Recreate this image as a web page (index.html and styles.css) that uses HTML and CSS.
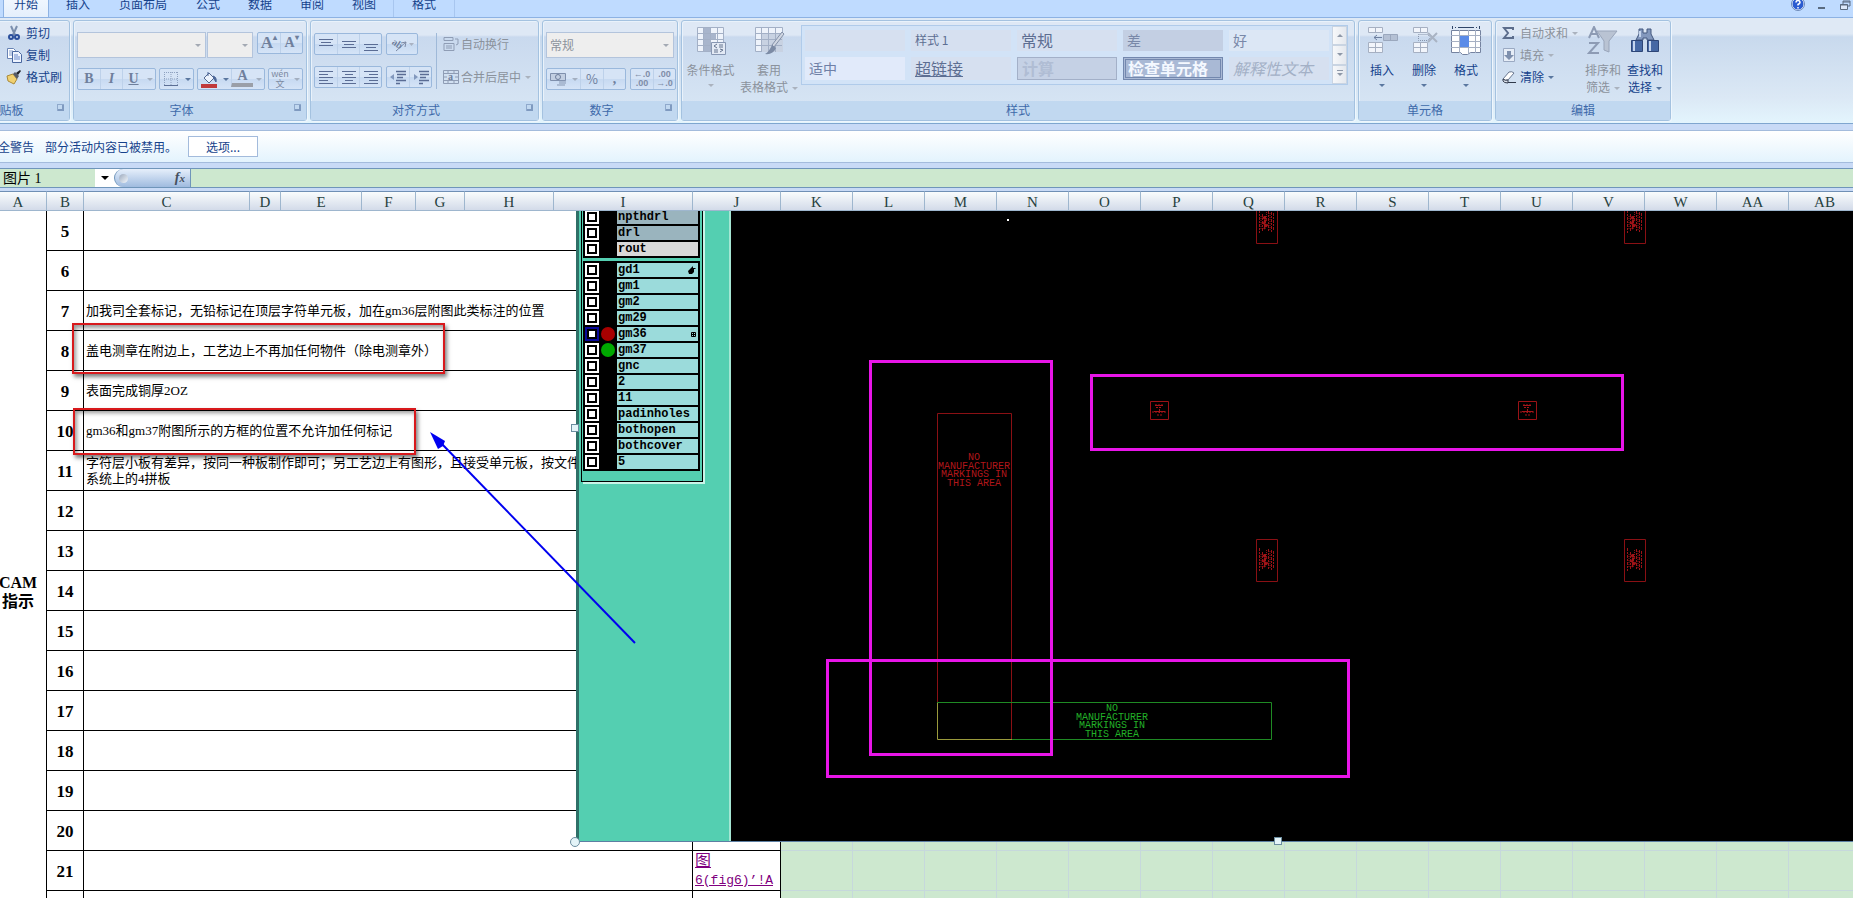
FILE: index.html
```
<!DOCTYPE html>
<html lang="zh-CN">

<head>
    <meta charset="utf-8">
    <title>CAM 指示</title>
    <link rel="stylesheet" href="styles.css">
</head>

<body>
    <nav class="tabs">
        <a href="#" class="tab active">开始</a>
        <a href="#" class="tab">插入</a>
        <a href="#" class="tab wide">页面布局</a>
        <a href="#" class="tab">公式</a>
        <a href="#" class="tab">数据</a>
        <a href="#" class="tab">审阅</a>
        <a href="#" class="tab">视图</a>
        <a href="#" class="tab context">格式</a>
        <div class="window-tools">
            <button aria-label="帮助"><svg width="14" height="14"><circle cx="7" cy="7" r="6" fill="#2a5bd0" stroke="#e8f0ff"/><circle cx="7" cy="7" r="6.5" fill="none" stroke="#6b88b8"/><path d="M5 5.5q0-2 2-2t2 2q0 1-2 2v1M7 10v1.500" fill="none" stroke="#fff" stroke-width="1.500"/></svg></button>
            <button aria-label="最小化"><svg width="10" height="14"><path d="M1 11h7" stroke="#5a6b80" stroke-width="2"/></svg></button>
            <button aria-label="还原"><svg width="12" height="14"><path d="M4 7V4h7v5H9M4 5h7" fill="none" stroke="#5a6b80"/><path d="M1.500 7.500h7v5h-7zM1 8h8" fill="#dce9fb" stroke="#5a6b80"/></svg></button>
        </div>
    </nav>

    <div class="ribbon">
        <section class="group clipboard">
            <div class="body stack">
                <button><svg width="16" height="16"><path d="M5 1l4 9M11 1L7 10" stroke="#7b8fae" stroke-width="2"/><circle cx="5" cy="12" r="2" fill="none" stroke="#2b4f9c" stroke-width="2"/><circle cx="11" cy="12" r="2" fill="none" stroke="#2b4f9c" stroke-width="2"/></svg>剪切</button>
                <button><svg width="16" height="16"><path d="M1.500 1.500h6l2 2v8h-8z" fill="#fff" stroke="#6883b4"/><path d="M3 4h4M3 6h4M3 8h4" stroke="#7f9cd0"/><path d="M6.500 4.500h6l3 3v8h-9z" fill="#eef4ff" stroke="#4a68a0"/><path d="M8 8h4M8 10h6M8 12h6" stroke="#6a8acb"/></svg>复制</button>
                <button><svg width="16" height="16"><path d="M1 7l6-2 4 5-3 5-6-3z" fill="#f0d070" stroke="#a98a3a"/><path d="M7 5l2-2 4 4-2 3z" fill="#555b66"/><path d="M10 4l4-3 1 1-3 4z" fill="#20242c"/></svg>格式刷</button>
            </div>
            <footer>剪贴板<i class="launcher"></i></footer>
        </section>

        <section class="group font">
            <div class="body rows">
                <div class="row top">
                    <span class="combo family"><select aria-label="字体" disabled><option></option></select></span>
                    <span class="combo size"><select aria-label="字号" disabled><option></option></select></span>
                    <div class="cluster gap-left">
                        <button class="glyph big" disabled>A<sup>▴</sup></button>
                        <button class="glyph" disabled>A<sup>▾</sup></button>
                    </div>
                </div>
                <div class="row">
                    <div class="cluster">
                        <button class="glyph" disabled>B</button>
                        <button class="glyph italic" disabled>I</button>
                        <button class="glyph underline" disabled>U</button>
                        <button class="arrow" aria-label="下划线样式" disabled></button>
                    </div>
                    <div class="cluster">
                        <button aria-label="边框"><svg width="14" height="14"><path d="M.5 0v14M7 0v14M13.500 0v14M0 .5h14M0 7h14" stroke="#8fa2c0" stroke-dasharray="1 1"/><path d="M0 13.500h14" stroke="#5c6f95"/></svg></button>
                        <button class="arrow dark" aria-label="边框样式"></button>
                    </div>
                    <div class="cluster">
                        <button aria-label="填充颜色"><svg width="17" height="17"><path d="M3 7l5-5 5 5-5 5z" fill="#edf3fc" stroke="#53688f"/><path d="M7 5V1M12 5q4 1 3 6l-2-3z" fill="#4c6799" stroke="#4c6799"/><path d="M0 13h16v4H0z" fill="#c0393b"/></svg></button>
                        <button class="arrow dark" aria-label="填充颜色列表"></button>
                        <button class="glyph font-color" disabled>A</button>
                        <button class="arrow" aria-label="字体颜色列表" disabled></button>
                    </div>
                    <div class="cluster">
                        <button class="pinyin" disabled><span>wén</span><span>文</span></button>
                        <button class="arrow" aria-label="拼音" disabled></button>
                    </div>
                </div>
            </div>
            <footer class="with-launcher">字体<i class="launcher"></i></footer>
        </section>

        <section class="group align">
            <div class="body align-body">
                <div class="rows">
                    <div class="row top">
                        <div class="cluster">
                            <button aria-label="顶端对齐"><svg width="16" height="16"><path d="M1 3.500h14M3 6.500h10M1 9.500h14" stroke="#5a6c94"/></svg></button>
                            <button aria-label="垂直居中"><svg width="16" height="16"><path d="M1 5.500h14M3 8.500h10M1 11.500h14" stroke="#5a6c94"/></svg></button>
                            <button aria-label="底端对齐"><svg width="16" height="16"><path d="M1 8.500h14M3 11.500h10M1 14.500h14" stroke="#5a6c94"/></svg></button>
                        </div>
                        <div class="cluster">
                            <button class="orient" aria-label="方向" disabled><svg width="26" height="18"><path d="M7 16L17 7M17 7l-5 1M17 7l-1 5" fill="none" stroke="#7d8aa5"/><text x="3" y="10" transform="rotate(35 5 8)" class="mini">ab</text><path d="M20 8h5l-2.500 3z" fill="#a9b2c2"/></svg></button>
                        </div>
                    </div>
                    <div class="row">
                        <div class="cluster">
                            <button aria-label="左对齐"><svg width="16" height="16"><path d="M1 2.500h14M1 5.500h9M1 8.500h14M1 11.500h9M1 14.500h14" stroke="#5a6c94"/></svg></button>
                            <button aria-label="居中"><svg width="16" height="16"><path d="M1 2.500h14M4 5.500h8M1 8.500h14M4 11.500h8M1 14.500h14" stroke="#5a6c94"/></svg></button>
                            <button aria-label="右对齐"><svg width="16" height="16"><path d="M1 2.500h14M6 5.500h9M1 8.500h14M6 11.500h9M1 14.500h14" stroke="#5a6c94"/></svg></button>
                        </div>
                        <div class="cluster">
                            <button aria-label="减少缩进"><svg width="16" height="16"><path d="M6 2.500h10M7 5.500h9M7 8.500h6M6 11.500h10M6 14.500h4" stroke="#5a6c94" stroke-width="1.500"/><path d="M0 8l4-3v6z" fill="#8298bd"/></svg></button>
                            <button aria-label="增加缩进"><svg width="16" height="16"><path d="M6 2.500h10M7 5.500h9M7 8.500h6M6 11.500h10M6 14.500h4" stroke="#5a6c94" stroke-width="1.500"/><path d="M5 8L1 5v6z" fill="#8298bd"/></svg></button>
                        </div>
                    </div>
                </div>
                <div class="wrap-tools">
                    <button disabled><svg width="16" height="16"><path d="M1 1.500h9v3H1zM1 7.500h10v7H1zM3 10h6M3 12h6M12 3h3v5l-2 1" fill="none" stroke="#8f9db5"/></svg>自动换行</button>
                    <button disabled><svg width="16" height="16"><path d="M.5 1.500h15v13H.5zM0 4.500h16M0 11.500h16M5 1v3M11 1v3M5 12v3M11 12v3M1 8h3M12 8h3" fill="none" stroke="#8f9db5"/><text x="5" y="11" class="mini">a</text></svg>合并后居中<i class="drop"></i></button>
                </div>
            </div>
            <footer class="with-launcher">对齐方式<i class="launcher"></i></footer>
        </section>

        <section class="group number">
            <div class="body rows">
                <div class="row top">
                    <span class="combo format"><select aria-label="数字格式" disabled><option>常规</option></select></span>
                </div>
                <div class="row">
                    <div class="cluster">
                        <button aria-label="货币" disabled><svg width="17" height="16"><path d="M.5 2.500h15v7H.5z" fill="#c2cfe2" stroke="#7f90ad"/><circle cx="8" cy="6" r="2.500" fill="none" stroke="#6d7d9b"/><path d="M9 10h7M9 12h7M7 14h8" stroke="#8797b2"/></svg></button>
                        <button class="arrow" aria-label="货币列表" disabled></button>
                        <button class="percent" disabled>%</button>
                        <button class="glyph" disabled>,</button>
                    </div>
                    <div class="cluster decimals">
                        <button disabled><span>←.0</span><span>.00</span></button>
                        <button disabled><span>.00</span><span>→.0</span></button>
                    </div>
                </div>
            </div>
            <footer class="with-launcher">数字<i class="launcher"></i></footer>
        </section>

        <section class="group styles">
            <div class="body styles-body">
                <button class="tall" disabled><svg width="32" height="30"><path d="M2.500 1.500h26v24h-26z" fill="#eef3fb" stroke="#a3b0c6"/><path d="M8 2h7v23H8zM15 8h6v6h-6z" fill="#a8b5cc"/><path d="M2 7.500h26M2 13.500h26M2 19.500h26M8.500 1v25M15.500 1v25M22.500 1v25" stroke="#a3b0c6"/><path d="M16.500 16.500h14v12h-14z" fill="#e3eaf5" stroke="#8797b3"/><path d="M22 18l-3 2 3 2M19 24h4M19 26h4M24 19h4M24 21h4M25 23l3 1-3 2" fill="none" stroke="#65748f"/></svg><span>条件格式</span><i class="drop"></i></button>
                <button class="tall" disabled><svg width="32" height="30"><path d="M2.500 1.500h27v24h-27z" fill="#eef3fb" stroke="#a3b0c6"/><path d="M9 8h21v18H9z" fill="#c8d2e2"/><path d="M2 7.500h27M2 13.500h27M2 19.500h27M8.500 1v25M15.500 1v25M22.500 1v25" stroke="#a3b0c6"/><path d="M31 8l-10 13-2-2L29 6z" fill="#cfd6e2" stroke="#8491a8"/><path d="M19 19l4 3q-3 7-11 6q4-2 7-9" fill="#7c8ba5"/></svg><span>套用<br>表格格式<i class="drop inline"></i></span></button>
                <div class="gallery">
                    <div class="swatches">
                        <button></button>
                        <button class="s12">样式 1</button>
                        <button class="s16">常规</button>
                        <button class="bad">差</button>
                        <button class="good">好</button>
                        <button class="neutral">适中</button>
                        <button class="s16 linked">超链接</button>
                        <button class="s16 calc">计算</button>
                        <button class="s16 check">检查单元格</button>
                        <button class="s16 note">解释性文本</button>
                    </div>
                    <div class="scroller">
                        <button aria-label="上一行"><i class="drop up"></i></button>
                        <button aria-label="下一行"><i class="drop"></i></button>
                        <button class="more" aria-label="其他"><i class="drop"></i></button>
                    </div>
                </div>
            </div>
            <footer>样式</footer>
        </section>

        <section class="group cells">
            <div class="body cells-body">
                <button class="tall"><svg width="32" height="30"><path d="M2.500 1.500h14v5h-14zM2.500 16.500h14v10h-14zM9.500 1v5M9.500 16v10M2 21.500h14" fill="#f2f5fb" stroke="#a6b0c2"/><path d="M17.500 8.500h14v6h-14zM24.500 8v6" fill="#b4c0d4" stroke="#9aa7bd"/><path d="M16 11.500H8M11 9l-3 2.500 3 2.500" fill="none" stroke="#6d7f9f"/></svg><span>插入</span><i class="drop"></i></button>
                <button class="tall"><svg width="32" height="30"><path d="M5.500 1.500h14v5h-14zM5.500 16.500h14v10h-14zM12.500 1v5M12.500 16v10M5 21.500h14" fill="#f2f5fb" stroke="#a6b0c2"/><path d="M10.500 8.500h9l3 3-3 3h-9z" fill="none" stroke="#8794ab" stroke-dasharray="1 1"/><path d="M20 7l9 9M29 7l-9 9" stroke="#a9b3c3" stroke-width="2"/></svg><span>删除</span><i class="drop"></i></button>
                <button class="tall"><svg width="32" height="30"><path d="M2 1.500h28" stroke="#2e4468" stroke-dasharray="1 2"/><path d="M9 1.500h14M2.500 0v3M29.500 0v3" stroke="#2e4468"/><path d="M1.500 4.500h29v22h-10l-3 2h-5l-2-2h-9z" fill="#fff" stroke="#7583a0"/><path d="M1 9.500h30M1 21.500h30M9.500 4v23M18.500 4v23M25.500 4v23M1 15.500h8M19 15.500h12" stroke="#a6b0c3"/><path d="M10 10h9v11h-9z" fill="#5a8be8"/></svg><span>格式</span><i class="drop"></i></button>
            </div>
            <footer>单元格</footer>
        </section>

        <section class="group edit">
            <div class="body edit-body">
                <div class="stack">
                    <button disabled><svg width="14" height="16"><path d="M11 5V3H2l4 5-4 5h9v-2" fill="none" stroke="#5c6d8c" stroke-width="2"/></svg>自动求和<i class="drop"></i></button>
                    <button disabled><svg width="14" height="16"><path d="M1.500 1.500h11v13h-11z" fill="#e6edf7" stroke="#9aa9c2"/><path d="M5 4h4v4h3l-5 5-5-5h3z" fill="#7e90ae"/></svg>填充<i class="drop"></i></button>
                    <button><svg width="14" height="16"><path d="M1 10l6-7q3-1 5 1l-6 7q-3 1-5-1z" fill="#fff" stroke="#69778f"/><path d="M1 10q2 2 5 1v3q-4 0-5-2zM6 13.500h8" fill="#dfe4ee" stroke="#30394a"/></svg>清除<i class="drop"></i></button>
                </div>
                <button class="tall" disabled><svg width="32" height="30"><path d="M2 12L7 1l5 11M4 8h6M2 17h9L2 27h10" fill="none" stroke="#8d9bb4" stroke-width="2"/><path d="M10 5h20l-8 10v11l-5-2V15z" fill="#b9c3d3" stroke="#99a5ba"/></svg><span>排序和<br>筛选<i class="drop inline"></i></span></button>
                <button class="tall"><svg width="32" height="30"><path d="M10 3h4v4h4V3h4v5l3 6h-7v-2h-4v2H7l3-6z" fill="#8398bd" stroke="#44587f"/><path d="M2.500 14.500h11v11h-11zM18.500 14.500h11v11h-11z" fill="#4668a4" stroke="#2e4677"/><path d="M5 15v10M21 15v10M11 5v6" stroke="#c5d5ee" stroke-width="2"/></svg><span>查找和<br>选择<i class="drop inline"></i></span></button>
            </div>
            <footer>编辑</footer>
        </section>
    </div>

    <div class="message-bar">
        <span>安全警告</span>
        <span>部分活动内容已被禁用。</span>
        <button>选项...</button>
    </div>

    <div class="formula-bar">
        <input class="name-box" aria-label="名称框" value="图片 1">
        <button class="name-drop" aria-label="名称列表"><i class="drop"></i></button>
        <div class="fx"><i class="knob"></i><button aria-label="插入函数"><i>f</i><small>x</small></button></div>
        <input class="formula" aria-label="编辑栏">
    </div>

    <main class="sheet">
        <table>
            <colgroup>
                <col class="w-a"><col class="w-b"><col class="w-c"><col class="w-d"><col class="w-e"><col class="w-f"><col class="w-g"><col class="w-h"><col class="w-i"><col class="w-j">
                <col span="18" class="w-std">
            </colgroup>
            <thead>
                <tr>
                    <th>A</th><th>B</th><th>C</th><th>D</th><th>E</th><th>F</th><th>G</th><th>H</th><th>I</th><th>J</th>
                    <th>K</th><th>L</th><th>M</th><th>N</th><th>O</th><th>P</th><th>Q</th><th>R</th><th>S</th><th>T</th>
                    <th>U</th><th>V</th><th>W</th><th>AA</th><th>AB</th><th></th><th></th><th></th>
                </tr>
            </thead>
            <tbody>
                <tr><td class="title" rowspan="19">CAM<br>指示</td><td class="no">5</td><td colspan="7"></td><td></td><td class="empty" colspan="18" rowspan="19"></td></tr>
                <tr><td class="no">6</td><td colspan="7"></td><td></td></tr>
                <tr><td class="no">7</td><td colspan="7">加我司全套标记，无铅标记在顶层字符单元板，加在gm36层附图此类标注的位置</td><td></td></tr>
                <tr><td class="no">8</td><td colspan="7">盖电测章在附边上，工艺边上不再加任何物件（除电测章外）</td><td></td></tr>
                <tr><td class="no">9</td><td colspan="7">表面完成铜厚2OZ</td><td></td></tr>
                <tr><td class="no">10</td><td colspan="7">gm36和gm37附图所示的方框的位置不允许加任何标记</td><td></td></tr>
                <tr><td class="no">11</td><td colspan="7">字符层小板有差异，按同一种板制作即可；另工艺边上有图形，且接受单元板，按文件<br>系统上的4拼板</td><td></td></tr>
                <tr><td class="no">12</td><td colspan="7"></td><td></td></tr>
                <tr><td class="no">13</td><td colspan="7"></td><td></td></tr>
                <tr><td class="no">14</td><td colspan="7"></td><td></td></tr>
                <tr><td class="no">15</td><td colspan="7"></td><td></td></tr>
                <tr><td class="no">16</td><td colspan="7"></td><td></td></tr>
                <tr><td class="no">17</td><td colspan="7"></td><td></td></tr>
                <tr><td class="no">18</td><td colspan="7"></td><td></td></tr>
                <tr><td class="no">19</td><td colspan="7"></td><td></td></tr>
                <tr><td class="no">20</td><td colspan="7"></td><td></td></tr>
                <tr><td class="no">21</td><td colspan="7"></td><td class="ref"><a href="#">图<br><span>6(fig6)’!A</span></a></td></tr>
                <tr><td class="no">22</td><td colspan="7"></td><td></td></tr>
                <tr><td class="no">23</td><td colspan="7"></td><td></td></tr>
            </tbody>
        </table>

        <!-- inserted picture: layer list and board view -->
        <div class="picture">
            <div class="side">
                <div class="panel">
                    <div class="layers">
                        <label class="drill"><input type="checkbox"><i></i><span>npthdrl</span></label>
                        <label class="drill"><input type="checkbox"><i></i><span>drl</span></label>
                        <label class="rout"><input type="checkbox"><i></i><span>rout</span></label>
                    </div>
                    <div class="layers">
                        <label><input type="checkbox"><i></i><span>gd1<svg width="8" height="8"><path d="M0 5l3-3 2-2v2h2l1 1H6v3l-2 2H1z"/></svg></span></label>
                        <label><input type="checkbox"><i></i><span>gm1</span></label>
                        <label><input type="checkbox"><i></i><span>gm2</span></label>
                        <label><input type="checkbox"><i></i><span>gm29</span></label>
                        <label class="current"><input type="checkbox"><i class="red"></i><span>gm36<svg width="5" height="5"><path d="M.5.5h4v4h-4zM2.500 0v5M0 2.500h5" fill="none" stroke="#000"/></svg></span></label>
                        <label><input type="checkbox"><i class="green"></i><span>gm37</span></label>
                        <label><input type="checkbox"><i></i><span>gnc</span></label>
                        <label><input type="checkbox"><i></i><span>2</span></label>
                        <label><input type="checkbox"><i></i><span>11</span></label>
                        <label><input type="checkbox"><i></i><span>padinholes</span></label>
                        <label><input type="checkbox"><i></i><span>bothopen</span></label>
                        <label><input type="checkbox"><i></i><span>bothcover</span></label>
                        <label><input type="checkbox"><i></i><span>5</span></label>
                    </div>
                </div>
            </div>
            <svg class="board">
                <defs>
                    <g id="tag">
                        <path d="M.5.5h21v42H.5z" fill="none" stroke="#8a1014"/>
                        <path d="M3.500 9v23M6.500 13v18M12.500 10v20M15.500 11v20M17.500 12v18" stroke="#9a1216" stroke-dasharray="3 1 2 1"/>
                        <path d="M5 15v14M10.500 11v8M14 12v18" stroke="#8e1216" stroke-dasharray="1 1"/>
                        <path d="M7 16l3 3-3 3 4 2-3 4M9 15v12" fill="none" stroke="#a01418" stroke-width="2" stroke-dasharray="3 1"/>
                    </g>
                    <g id="mark">
                        <path d="M.5.5h18v18H.5z" fill="none" stroke="#9a1216"/>
                        <path d="M5 4h8M6 6.500h6M2 11h14M7 14h5" stroke="#a81418" stroke-dasharray="2 1"/>
                        <path d="M5 4.500h8M4 10.500h11M9.500 8v4" stroke="#a81418"/>
                    </g>
                </defs>
                <rect x="276" y="8" width="2" height="2" fill="#fff"/>
                <use href="#tag" x="525" y="-10"/>
                <use href="#tag" x="893" y="-10"/>
                <use href="#tag" x="525" y="328"/>
                <use href="#tag" x="893" y="328"/>
                <use href="#mark" x="419" y="190"/>
                <use href="#mark" x="787" y="190"/>
                <path d="M206.500 491V202.500h74V528" class="trace red"/>
                <path d="M206 491.500h334.500v37H281" class="trace green"/>
                <path d="M206.500 492v36.500H281" class="trace both"/>
                <g class="legend red">
                    <text x="243" y="249">NO</text>
                    <text x="243" y="258">MANUFACTURER</text>
                    <text x="243" y="266">MARKINGS IN</text>
                    <text x="243" y="275">THIS AREA</text>
                </g>
                <g class="legend green">
                    <text x="381" y="500">NO</text>
                    <text x="381" y="509">MANUFACTURER</text>
                    <text x="381" y="517">MARKINGS IN</text>
                    <text x="381" y="526">THIS AREA</text>
                </g>
                <g class="outline">
                    <rect x="139.500" y="150.500" width="181" height="393"/>
                    <rect x="360.500" y="164.500" width="531" height="74"/>
                    <rect x="96.500" y="449.500" width="521" height="116"/>
                </g>
            </svg>
            <i class="handle left"></i>
            <i class="handle corner"></i>
            <i class="handle bottom"></i>
        </div>

        <div class="frame first"></div>
        <div class="frame second"></div>
        <svg class="pointer">
            <path d="M635 452L441 252" stroke="#0000f0" stroke-width="2"/>
            <path d="M430 241l15 9-2 5-5 3z" fill="#0000f0"/>
        </svg>
    </main>
</body>

</html>
```
FILE: styles.css
```
* {
    box-sizing: border-box;
}

body {
    margin: 0;
    height: 100vh;
    display: flex;
    flex-direction: column;
    overflow: hidden;
    background: #c8daf6;
    color: #15428b;
    font-family: "Noto Sans CJK SC", sans-serif;
    font-size: 12px;
    line-height: 16px;
}

button,
select,
input {
    font: inherit;
    color: inherit;
    margin: 0;
    padding: 0;
    border: 0;
    background: none;
    border-radius: 0;
}

svg {
    display: block;
    flex: none;
}

/* tabs */
.tabs {
    display: flex;
    flex: none;
    height: 24px;
    margin-top: -7px;
    padding-left: 3px;
    background: #bfdbff;
}

.tab {
    width: 46px;
    margin-right: 6px;
    padding-top: 3px;
    text-align: center;
    color: #15428b;
    text-decoration: none;
}

.tab.active {
    background: linear-gradient(#f4f9ff, #e4effc);
    border: solid #8db2e3;
    border-width: 0 1px;
}

.tab.wide {
    width: 72px;
}

.tab.context {
    width: 62px;
    border: solid #a8c6ef;
    border-width: 0 1px;
}

.window-tools {
    display: flex;
    gap: 12px;
    align-items: flex-start;
    margin-left: auto;
    padding: 4px 2px 0 0;
}

/* ribbon */
.ribbon {
    display: flex;
    flex: none;
    gap: 3px;
    height: 107px;
    margin-left: -59px;
    padding-top: 2px;
    border-top: 1px solid #8db2e3;
    border-bottom: 1px solid #7fa6cf;
    background: linear-gradient(#dfe9f5 15%, #c8d9ed 18%, #dbe8f5 75%, #e3f5fd);
}

.group {
    display: flex;
    flex-direction: column;
    flex: none;
    height: 101px;
    border: 1px solid #a4c2e0;
    border-radius: 3px;
    box-shadow: inset 1px 1px #e9f2fb, 1px 1px #eef6fd;
    background: linear-gradient(#dee8f5 14px, #c9d9ee 16px, #d9e7f5);
}

.group.clipboard {
    width: 129px;
}

.group.font {
    width: 234px;
}

.group.align {
    width: 229px;
}

.group.number {
    width: 136px;
}

.group.styles {
    width: 674px;
}

.group.cells {
    width: 134px;
}

.group.edit {
    width: 176px;
}

.body {
    flex: 1;
    padding: 0 3px;
}

.group footer {
    position: relative;
    height: 19px;
    line-height: 18px;
    text-align: center;
    color: #3e6aaa;
    background: #c1d8f0;
}

.group footer.with-launcher {
    padding-right: 17px;
}

.launcher {
    position: absolute;
    right: 5px;
    top: 3px;
    width: 7px;
    height: 7px;
    border: solid #8fa9cc;
    border-width: 1px 0 0 1px;
}

.launcher::after {
    content: "";
    position: absolute;
    right: 0;
    bottom: 0;
    width: 4px;
    height: 4px;
    border: solid #7f9ac0;
    border-width: 0 2px 2px 0;
}

.drop {
    display: inline-block;
    border: 3px solid transparent;
    border-top-color: #5a779f;
    border-bottom: 0;
}

button:disabled {
    color: #8b929c;
}

button:disabled .drop {
    border-top-color: #aab2be;
}

.stack {
    display: flex;
    flex-direction: column;
    align-items: flex-start;
    gap: 6px;
    padding-top: 4px;
}

.stack button {
    display: flex;
    align-items: center;
    gap: 4px;
}

.clipboard .stack {
    padding-left: 64px;
}

.rows {
    display: flex;
    flex-direction: column;
    gap: 10px;
    padding-top: 11px;
}

.row {
    display: flex;
    gap: 4px;
    height: 22px;
}

.row.top {
    height: 26px;
}

.font .row {
    gap: 3px;
}

.font .row.top {
    gap: 1px;
}

.gap-left {
    margin-left: 3px;
}

.combo {
    position: relative;
    height: 26px;
    border: 1px solid #b3c4dc;
    background: #eeeeee;
}

.combo select {
    width: 100%;
    height: 100%;
    padding-left: 3px;
    appearance: none;
    color: #8b929c;
    opacity: 1;
}

.combo::after {
    content: "";
    position: absolute;
    right: 4px;
    top: 11px;
    border: 3px solid transparent;
    border-top-color: #a3a9b3;
    border-bottom: 0;
}

.combo.family {
    width: 131px;
}

.combo.size {
    width: 47px;
}

.combo.format {
    width: 128px;
}

.cluster {
    display: flex;
    height: 22px;
    border: 1px solid #9ab8dc;
    border-radius: 2px;
    background: linear-gradient(#d6e4f6 50%, #c6d9f1 50%, #d5e4f7);
}

.cluster button {
    display: flex;
    align-items: center;
    justify-content: center;
    width: 22px;
}

.cluster button + button:not(.arrow) {
    border-left: 1px solid #bdd1ea;
}

.cluster .arrow {
    width: 11px;
}

.arrow::after {
    content: "";
    border: 3px solid transparent;
    border-top-color: #a3afc0;
    border-bottom: 0;
}

.arrow.dark::after {
    border-top-color: #5a779f;
}

.cluster .glyph {
    font: bold 14px "Liberation Serif", serif;
    color: #6f7f9c;
}

.cluster .glyph.big {
    font-size: 17px;
}

.glyph sup {
    align-self: flex-start;
    font-size: 8px;
}

.glyph.italic {
    font-style: italic;
}

.glyph.underline {
    text-decoration: underline;
}

.cluster .font-color {
    height: 18px;
    border-bottom: 4px solid #9a9fa8;
}

.cluster .pinyin {
    flex-direction: column;
    font-size: 9px;
    line-height: 10px;
    color: #7c89a1;
}

.mini {
    font: bold 10px "Liberation Serif", serif;
    fill: #6f7f9c;
}

/* alignment group */
.align-body {
    display: flex;
    padding-top: 12px;
}

.align-body .rows {
    gap: 7px;
    padding: 0 4px 0 0;
    border-right: 1px solid #9fb9d8;
    height: 56px;
}

.cluster .orient {
    width: 30px;
}

.wrap-tools {
    display: flex;
    flex-direction: column;
    gap: 17px;
    padding: 3px 0 0 6px;
}

.wrap-tools button {
    display: flex;
    align-items: center;
    gap: 2px;
}

.wrap-tools .drop {
    margin-left: 2px;
}

.cluster .percent {
    width: 23px;
    font-size: 13px;
    color: #6f7f9c;
}

.decimals button {
    flex-direction: column;
    font: bold 9px/9px "Liberation Sans", sans-serif;
    color: #7f8da8;
}

/* large buttons */
.tall {
    display: flex;
    flex-direction: column;
    align-items: center;
    padding-top: 5px;
    line-height: 17px;
    text-align: center;
}

.tall svg {
    margin-bottom: 5px;
}

.tall > .drop {
    margin-top: 6px;
}

.drop.inline {
    margin-left: 4px;
    vertical-align: middle;
}

.styles-body {
    display: flex;
    align-items: flex-start;
    padding: 0 6px 0 0;
}

.styles-body .tall {
    width: 57px;
}

.styles-body .tall + .tall {
    width: 60px;
}

.cells-body {
    display: flex;
    align-items: flex-start;
    padding: 0 2px;
}

.cells-body .tall {
    width: 42px;
}

.edit-body {
    display: flex;
    align-items: flex-start;
    padding: 0 3px 0 6px;
}

.edit-body > .stack {
    width: 80px;
}

.edit-body .tall {
    width: 42px;
    white-space: nowrap;
}

.gallery {
    display: flex;
    flex: 1;
    height: 60px;
    margin-top: 4px;
    margin-left: 2px;
    border: 1px solid #b0cbea;
    background: #d2e3f7;
}

.swatches {
    display: grid;
    flex: 1;
    grid-template-columns: repeat(5, 1fr);
    gap: 6px;
    padding: 4px 3px;
}

.swatches button {
    padding: 0 0 2px 4px;
    text-align: left;
    font-size: 14px;
    line-height: 18px;
    color: #5d6e92;
    background: #d6e0f0;
}

.swatches .s12 {
    font-size: 12px;
}

.swatches .s16 {
    font-size: 16px;
}

.swatches .bad {
    background: #c3cfe3;
    color: #7988a8;
}

.swatches .good {
    background: #dce7f5;
    color: #7988a8;
}

.swatches .neutral {
    background: #e1eafa;
    color: #6f80a6;
}

.swatches .linked {
    text-decoration: underline;
}

.swatches .calc {
    border: 1px solid #a3b0c8;
    background: #c5d1e5;
    color: #b0bdd4;
    font-weight: bold;
}

.swatches .check {
    border: 3px double #7388ae;
    padding-left: 2px;
    background: #a9b9d5;
    color: #f4f8ff;
    font-weight: bold;
    line-height: 14px;
}

.swatches .note {
    color: #a3b0c6;
    font-style: italic;
}

.scroller {
    display: flex;
    flex-direction: column;
    width: 15px;
}

.scroller button {
    flex: 1;
    display: flex;
    align-items: center;
    justify-content: center;
    border: 1px solid #c9d4e2;
    background: linear-gradient(90deg, #f7f8fa, #e4e8ee);
}

.scroller .drop {
    border-top-color: #8e98a8;
}

.scroller .up {
    border: 3px solid transparent;
    border-top: 0;
    border-bottom-color: #8e98a8;
}

.scroller .more .drop {
    position: relative;
}

.scroller .more .drop::before {
    content: "";
    position: absolute;
    left: -3px;
    top: -6px;
    width: 6px;
    height: 1px;
    background: #8e98a8;
}

/* message bar */
.message-bar {
    display: flex;
    flex: none;
    align-items: center;
    gap: 11px;
    height: 33px;
    margin-top: 6px;
    border: solid #a3bbdc;
    border-width: 1px 0;
    background: linear-gradient(#ffffff, #e3f3fd);
}

.message-bar span:first-child {
    margin-left: -14px;
}

.message-bar button {
    width: 70px;
    height: 21px;
    border: 1px solid #a3bbdc;
    background: #fff;
}

/* formula bar */
.formula-bar {
    display: flex;
    flex: none;
    height: 20px;
    margin: 5px 0 3px;
    border: solid #6f95ba;
    border-width: 1px 0;
    background: #cde8cf;
    color: #000;
    font-family: "Liberation Serif", "Noto Sans CJK SC", serif;
    font-size: 14px;
}

.name-box {
    width: 95px;
    padding: 2px 0 0 3px;
}

.name-drop {
    width: 29px;
    background: #fff;
}

.name-drop .drop {
    display: block;
    width: 8px;
    margin-left: 6px;
    border-width: 4px 4px 0;
    border-top-color: #000;
}

.fx {
    display: flex;
    align-items: center;
    justify-content: space-between;
    width: 77px;
    margin-left: -10px;
    padding: 0 5px 0 4px;
    border: solid #6f95ba;
    border-width: 0 1px;
    border-radius: 9px 0 0 9px;
    background: linear-gradient(#e6effb, #9fbbdf);
}

.knob {
    width: 9px;
    height: 9px;
    border-radius: 50%;
    background: linear-gradient(135deg, #9ba9bd, #f4f8fd);
}

.fx button {
    font-weight: bold;
    line-height: 16px;
    color: #454f5e;
}

.fx small {
    font-size: 11px;
    font-style: italic;
}

.formula {
    flex: 1;
}

/* sheet */
.sheet {
    position: relative;
    flex: 1;
    min-height: 0;
    overflow: hidden;
    background: #fff;
    color: #000;
    font-family: "Liberation Serif", "Noto Sans CJK SC", serif;
    font-size: 13px;
}

table {
    width: 2087px;
    margin-left: -10px;
    table-layout: fixed;
    border-spacing: 0;
}

.w-a { width: 57px; }
.w-b { width: 37px; }
.w-c { width: 166px; }
.w-d { width: 31px; }
.w-e { width: 81px; }
.w-f { width: 54px; }
.w-g { width: 49px; }
.w-h { width: 89px; }
.w-i { width: 139px; }
.w-j { width: 88px; }
.w-std { width: 72px; }

th {
    height: 20px;
    padding: 2px 0 0;
    border: solid #9eb6ce;
    border-width: 1px 1px 1px 0;
    border-top-color: #6f8fb5;
    background: linear-gradient(#f9fcfd, #d3dbe9);
    color: #27413e;
    font-size: 15px;
    font-weight: normal;
    line-height: 16px;
}

td {
    height: 40px;
    padding: 0 2px;
    border: solid #000;
    border-width: 0 1px 1px 0;
    white-space: nowrap;
}

.title,
.no {
    padding: 2px 0 0;
    text-align: center;
    font-size: 17px;
    font-weight: bold;
}

.title {
    font-size: 16px;
    line-height: 19px;
}

.ref {
    font-size: 16px;
    line-height: 18px;
}

.ref a {
    color: #800080;
}

.ref span {
    font-family: "Liberation Mono", monospace;
    font-size: 13px;
}

.empty {
    border: 0;
    background:
        repeating-linear-gradient(90deg, transparent 0 71px, #c6d8dc 71px 72px),
        repeating-linear-gradient(transparent 0 39px, #c6d8dc 39px 40px),
        #cde8cf;
}

/* picture placed over the cells */
.picture {
    position: absolute;
    left: 576px;
    top: 20px;
    right: 0;
    height: 631px;
    display: flex;
    background: #000;
    border-bottom: 1px solid #5d7fa3;
}

.side {
    width: 155px;
    padding-left: 2px;
    overflow: hidden;
    border: solid #2f7068;
    border-width: 0 2px 0 3px;
    border-right-color: #a5e6d3;
    background: #54cfb1;
}

.panel {
    width: 122px;
    margin-top: -2px;
    padding: 0 2px 10px 1px;
    border: solid #000;
    border-width: 0 1px 1px;
    box-shadow: 2px 2px #c8f5e8;
}

.layers {
    padding: 1px 0;
    background: #000;
}

.layers:first-child {
    padding-top: 0;
    margin-bottom: 3px;
}

.layers label {
    display: flex;
    align-items: center;
    height: 16px;
    padding: 0 2px;
}

.layers input {
    appearance: none;
    width: 14px;
    height: 14px;
    border: 2px solid #fff;
    background: #fff;
    box-shadow: inset 0 0 0 2px #000;
}

.layers .current input {
    border-color: #0a0a9a;
}

.layers i {
    width: 14px;
    height: 14px;
    margin: 0 2px;
    border-radius: 50%;
}

.layers i.red {
    background: #a80000;
}

.layers i.green {
    background: #00a800;
}

.layers span {
    display: flex;
    flex: 1;
    align-items: center;
    justify-content: space-between;
    height: 14px;
    padding: 0 2px 0 1px;
    background: #9bdbdb;
    font: bold 12px/14px "Liberation Mono", monospace;
}

.layers .drill span {
    background: #9ab4be;
}

.layers .rout span {
    background: #d9d9d9;
}

.board {
    flex: 1;
    width: 0;
    height: 100%;
    overflow: hidden;
}

.trace {
    fill: none;
}

.trace.red {
    stroke: #8a1014;
}

.trace.green {
    stroke: #1f8a24;
}

.trace.both {
    stroke: #9a9a3c;
}

.legend {
    font: 10px "Liberation Mono", monospace;
    text-anchor: middle;
}

.legend.red {
    fill: #b0161a;
}

.legend.green {
    fill: #22b028;
}

.outline {
    fill: none;
    stroke: #e815e8;
    stroke-width: 3;
}

.handle {
    position: absolute;
    width: 8px;
    height: 8px;
    border: 1px solid #6c8ea0;
    background: #e4f4f8;
}

.handle.left {
    left: -5px;
    top: 213px;
}

.handle.corner {
    left: -6px;
    bottom: -6px;
    width: 10px;
    height: 10px;
    border-radius: 50%;
}

.handle.bottom {
    left: calc(55% - 4px);
    bottom: -4px;
}

/* review marks */
.frame {
    position: absolute;
    border: 2px solid #d8191c;
    box-shadow: 2px 3px 4px rgba(0, 0, 0, 0.5), inset 2px 3px 4px rgba(0, 0, 0, 0.4);
}

.frame.first {
    left: 72px;
    top: 132px;
    width: 373px;
    height: 51px;
}

.frame.second {
    left: 73px;
    top: 217px;
    width: 343px;
    height: 47px;
}

.pointer {
    position: absolute;
    left: 0;
    top: 0;
    width: 100%;
    height: 100%;
    pointer-events: none;
}
```
